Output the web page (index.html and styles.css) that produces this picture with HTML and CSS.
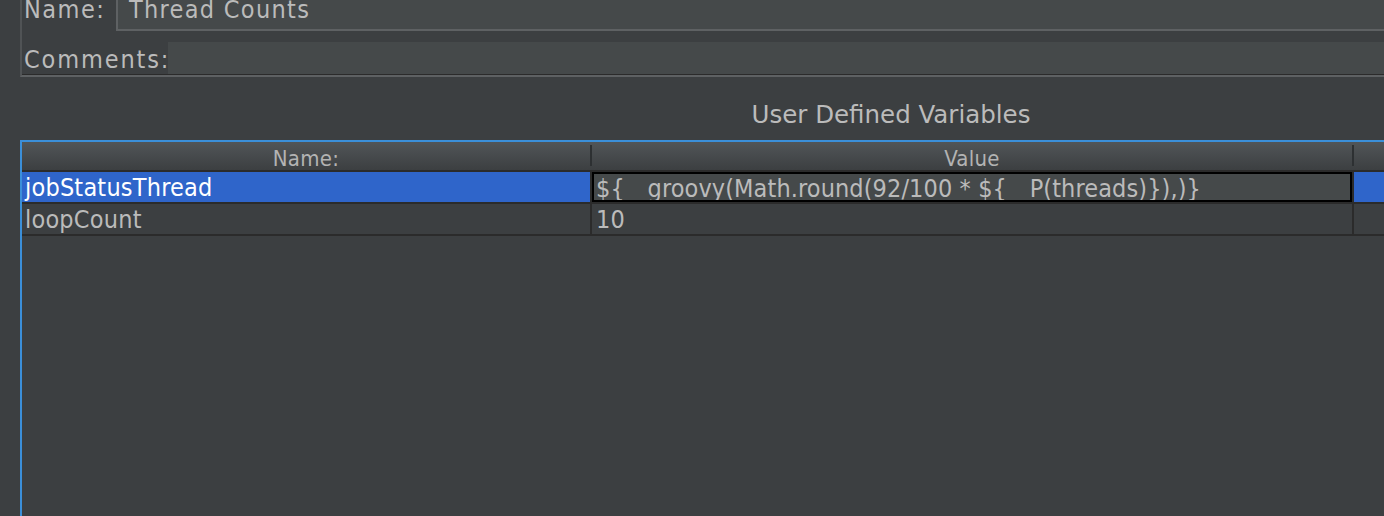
FILE: index.html
```html
<!DOCTYPE html>
<html>
<head>
<meta charset="utf-8">
<link rel="stylesheet" href="styles.css">
</head>
<body>
<div class="page">
  <div class="top-panel">
    <div class="field-row name-row">
      <label class="field-label name-label">Name:</label>
      <div class="text-field name-field">Thread Counts</div>
    </div>
    <div class="field-row comments-row">
      <label class="field-label comments-label">Comments:</label>
      <div class="text-field comments-field"></div>
    </div>
  </div>
  <div class="section-title">User Defined Variables</div>
  <div class="table">
    <div class="thead">
      <div class="th col-name">Name:</div>
      <div class="th col-value">Value</div>
      <div class="th col-extra"></div>
    </div>
    <div class="tr selected">
      <div class="td col-name">jobStatusThread</div>
      <div class="td col-value editing"><div class="editor">${__groovy(Math.round(92/100 * ${__P(threads)}),)}</div></div>
      <div class="td col-extra"></div>
    </div>
    <div class="tr">
      <div class="td col-name">loopCount</div>
      <div class="td col-value">10</div>
      <div class="td col-extra"></div>
    </div>
  </div>
</div>
</body>
</html>
```

FILE: styles.css
```css
html, body {
  margin: 0;
  padding: 0;
}
body {
  background: #3c3f41;
  width: 1384px;
  height: 516px;
  overflow: hidden;
  font-family: "DejaVu Sans", "Liberation Sans", sans-serif;
  color: #bbbbbb;
}
.page {
  width: 1762px;
  height: 516px;
  display: flex;
  flex-direction: column;
}

/* top name/comments panel */
.top-panel {
  margin-left: 20px;
  border-left: 2px solid #505355;
  display: flex;
  flex-direction: column;
  gap: 11px;
  border-bottom: 2px solid #5e6163;
  box-shadow: inset 0 -1px 0 #2b2b2b;
}
.field-row {
  display: flex;
  align-items: flex-start;
}
.field-label {
  font-size: 25px;
  font-stretch: condensed;
  letter-spacing: 1.5px;
  padding-left: 2px;
  box-sizing: border-box;
  white-space: nowrap;
}
.text-field {
  flex: 1;
  background: #45494a;
  font-size: 25px;
  font-stretch: condensed;
  box-sizing: border-box;
  white-space: nowrap;
}
.name-row {
  height: 31px;
}
.name-label {
  width: 94px;
  line-height: 19px;
}
.name-field {
  height: 31px;
  border-left: 2px solid #5e6163;
  border-bottom: 2px solid #5e6163;
  padding-left: 11px;
  line-height: 19px;
  letter-spacing: 1.3px;
}
.comments-row {
  height: 33px;
}
.comments-label {
  width: 146px;
  padding-top: 4px;
  line-height: 27px;
  letter-spacing: 1.85px;
}
.comments-field {
  height: 32px;
}

/* title */
.section-title {
  height: 63px;
  box-sizing: border-box;
  padding: 22px 0 10px 20px;
  line-height: 31px;
  font-size: 24.5px;
  text-align: center;
}

/* table */
.table {
  flex: 1;
  margin-left: 20px;
  border-top: 2px solid #3b8fd9;
  border-left: 2px solid #3b8fd9;
  display: flex;
  flex-direction: column;
}
.thead, .tr {
  display: flex;
  border-bottom: 2px solid #2b2b2b;
}
.thead {
  height: 30px;
  box-sizing: border-box;
  background: linear-gradient(#515558, #3c3f41);
}
.th {
  position: relative;
  font-size: 22px;
  font-stretch: condensed;
  letter-spacing: 0.3px;
  color: #b3b3b3;
  text-align: center;
  padding-top: 5px;
  line-height: 23px;
  box-sizing: border-box;
}
.th.col-name, .th.col-value {
  margin-right: 2px;
}
.th.col-name::after, .th.col-value::after {
  content: "";
  position: absolute;
  right: -2px;
  top: 3px;
  bottom: 4px;
  width: 2px;
  background: #2d3032;
}
.col-name {
  width: 568px;
}
.col-value {
  width: 760px;
}
.col-extra {
  flex: 1;
}
.tr {
  height: 32px;
  box-sizing: border-box;
}
.td {
  font-size: 25px;
  font-stretch: condensed;
  letter-spacing: 0.2px;
  height: 30px;
  box-sizing: border-box;
  white-space: nowrap;
  overflow: hidden;
}
.td.col-name {
  padding-left: 3px;
  padding-top: 1px;
  line-height: 29px;
  border-right: 2px solid #2b2b2b;
  width: 570px;
}
.td.col-value {
  padding-left: 4px;
  padding-top: 1px;
  line-height: 29px;
  border-right: 2px solid #2b2b2b;
  width: 762px;
}
.tr.selected .td.col-name,
.tr.selected .td.col-extra {
  background: #2f65ca;
  color: #ffffff;
}
.td.col-value.editing {
  padding: 0;
}
.editor {
  height: 30px;
  box-sizing: border-box;
  border: 2px solid #000000;
  background: #45494a;
  color: #bbbbbb;
  padding-left: 2px;
  padding-top: 2px;
  line-height: 26px;
  letter-spacing: 0.1px;
  overflow: hidden;
  white-space: nowrap;
}
```
